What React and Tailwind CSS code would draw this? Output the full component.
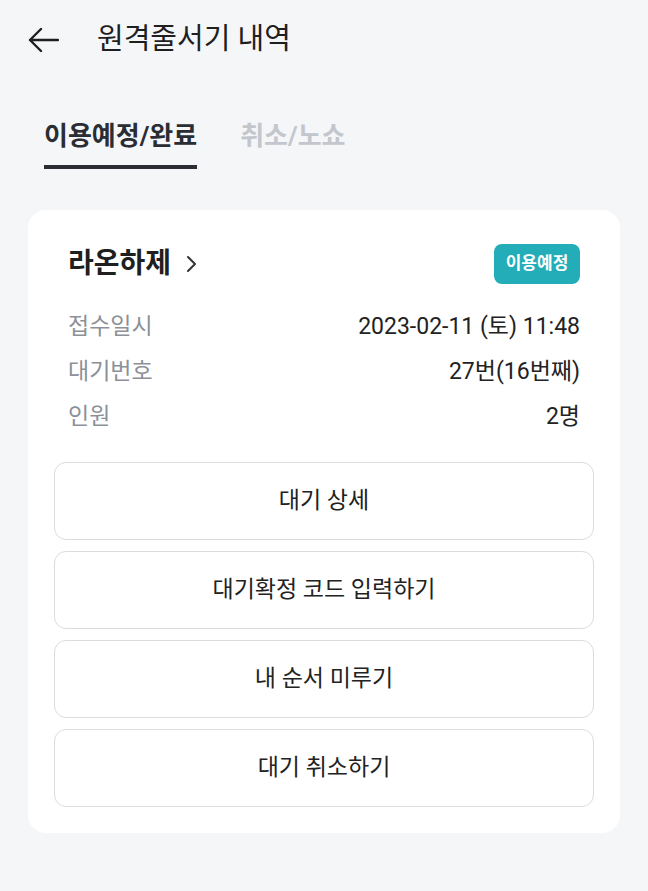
import React from "react";

const font = { fontFamily: "Roboto, 'Noto Sans CJK KR', sans-serif" };

const rows = [
  ["접수일시", "2023-02-11 (토) 11:48"],
  ["대기번호", "27번(16번째)"],
  ["인원", "2명"],
];

const actions = ["대기 상세", "대기확정 코드 입력하기", "내 순서 미루기", "대기 취소하기"];

function BackArrow() {
  return (
    <svg width="32" height="26" viewBox="0 0 32 26" fill="none">
      <path d="M31 13H3M14 2L3 13L14 24" stroke="#1f1f1f" strokeWidth="2.4" strokeLinecap="round" strokeLinejoin="round" />
    </svg>
  );
}

function Chevron() {
  return (
    <svg width="12" height="18" viewBox="0 0 12 18" fill="none">
      <path d="M3 2L10 9L3 16" stroke="#333" strokeWidth="2" strokeLinecap="round" strokeLinejoin="round" />
    </svg>
  );
}

export default function App() {
  return (
    <div className="min-h-[891px] bg-[#f5f6f8] text-[#222]" style={font}>
      {/* header */}
      <div className="h-[80px] flex items-center pl-[27px]">
        <BackArrow />
        <h1 className="ml-[38px] text-[29px] text-[#1f1f1f]">원격줄서기 내역</h1>
      </div>

      {/* tabs */}
      <div className="flex gap-[43px] px-[44px] mt-[38px]">
        <div className="flex flex-col">
          <span className="text-[26px] leading-[36px] font-bold text-[#2a2d33]">이용예정/완료</span>
          <div className="mt-[11px] h-[4px] bg-[#2a2d33]" />
        </div>
        <span className="text-[26px] leading-[36px] font-bold text-[#c3c7cd]">취소/노쇼</span>
      </div>

      {/* card */}
      <div className="mx-[28px] mt-[41px] bg-white rounded-[18px] px-[26px] pt-[34px] pb-[26px]">
        <div className="px-[14px]">
          <div className="h-[40px] flex items-center justify-between">
            <div className="flex items-center gap-[14px]">
              <span className="text-[28px] font-bold text-[#1f1f1f]">라온하제</span>
              <Chevron />
            </div>
            <span className="w-[86px] h-[40px] rounded-[8px] bg-[#22adb9] text-white text-[17px] font-bold flex items-center justify-center">
              이용예정
            </span>
          </div>
          <div className="mt-[21px]">
            {rows.map(([label, value]) => (
              <div key={label} className="h-[45px] flex items-center justify-between text-[23px]">
                <span className="text-[#8c9097]">{label}</span>
                <span className="text-[#222]">{value}</span>
              </div>
            ))}
          </div>
        </div>
        <div className="mt-[22px] flex flex-col gap-[11px]">
          {actions.map((a) => (
            <button
              key={a}
              className="h-[78px] w-full rounded-[12px] border border-[#dcdcdf] bg-white text-[23px] text-[#222]"
            >
              {a}
            </button>
          ))}
        </div>
      </div>
    </div>
  );
}
